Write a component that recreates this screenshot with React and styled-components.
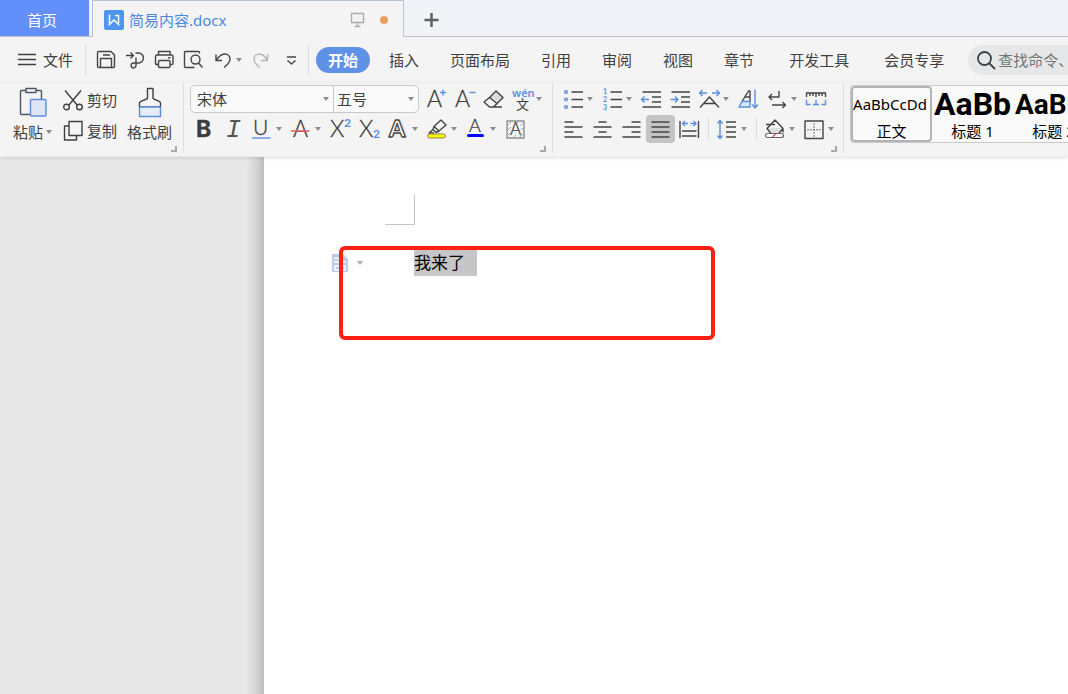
import React from 'react';
import styled, { createGlobalStyle, css } from 'styled-components';

const BLUE = '#5b8fdd';

const GlobalStyle = createGlobalStyle`
  * {
    box-sizing: border-box;
  }
  body {
    margin: 0;
    overflow: hidden;
    background: #e8e8e8;
    color: #404040;
    font: 15px/20px 'Noto Sans', 'Noto Sans CJK SC', sans-serif;
  }
  button,
  select,
  input {
    font: inherit;
    color: inherit;
    border: 0;
    padding: 0;
    margin: 0;
    background: none;
  }
`;

const AppShell = styled.div`
  display: flex;
  flex-direction: column;
  min-height: 100vh;
`;

/* ---------- tab strip ---------- */

const TabStrip = styled.header`
  display: flex;
  height: 37px;
  background: #f1f3f8;
`;

const HomeTab = styled.button`
  width: 89px;
  padding: 3px 5px 0 0;
  background: #638ffb;
  background-clip: padding-box;
  border-bottom: 1px solid #bcc2d6;
  color: #fff;
`;

const TabGap = styled.div`
  flex: ${(props) => (props.$grow ? 1 : '0 0 3px')};
  border-bottom: 1px solid #bcc2d6;
`;

const DocTab = styled.div`
  display: flex;
  align-items: center;
  width: 312px;
  padding: 2px 15px 0 11px;
  border: 1px solid #bcc2d6;
  border-bottom: 0;
  background: #f4f4f4;
  color: #4d86e0;

  span {
    flex: 1;
    margin-left: 5px;
  }
`;

const Dot = styled.i`
  width: 8px;
  height: 8px;
  margin-left: 15px;
  border-radius: 50%;
  background: #e5a05c;
`;

const AddTab = styled.button`
  width: 55px;
  padding-top: 3px;
  border-bottom: 1px solid #bcc2d6;
`;

/* ---------- menu row ---------- */

const MenuBar = styled.nav`
  display: flex;
  align-items: center;
  height: 46px;
  background: #f4f4f4;
  white-space: nowrap;
`;

const FileButton = styled.button`
  display: flex;
  align-items: center;
  gap: 7px;
  padding: 0 12px 0 18px;
`;

const Divider = styled.i`
  flex: none;
  width: 1px;
  height: ${(props) => props.$height || 30}px;
  margin: 0 ${(props) => props.$space || 0}px;
  background: #dcdcdc;
`;

const QuickTools = styled.div`
  display: flex;
  padding: 0 3px 0 6px;
`;

const MenuTabs = styled.div`
  display: flex;
  gap: 7px;
  padding-left: 7px;
`;

const MenuTab = styled.button`
  height: 26px;
  padding: 0 12px;
  border-radius: 13px;
  margin-left: ${(props) => (props.$wide ? 4 : 0)}px;

  ${(props) =>
    props.$active &&
    css`
      background: #5f92e6;
      color: #fff;
      font-weight: 700;
    `}
`;

const Search = styled.label`
  display: flex;
  align-items: center;
  flex: 1;
  gap: 2px;
  min-width: 100px;
  height: 30px;
  margin-left: 12px;
  padding-left: 8px;
  border-radius: 15px 0 0 15px;
  background: #e6e7e8;
  overflow: hidden;

  input {
    flex: 1;
    width: 70px;
    outline: 0;
  }
  input::placeholder {
    color: #757575;
    opacity: 1;
  }
`;

/* ---------- ribbon ---------- */

const Ribbon = styled.section`
  display: flex;
  height: 74px;
  background: #f4f4f4;
  border-bottom: 1px solid #ececec;
  box-shadow: 0 1px 4px rgba(0, 0, 0, 0.12);
  z-index: 1;
  overflow: hidden;
  white-space: nowrap;
`;

const Group = styled.div`
  position: relative;
  display: flex;
  flex: none;
  padding: ${(props) => props.$pad};
  border-right: 1px solid #dedede;
  margin-bottom: 3px;
`;

const Corner = styled.i`
  position: absolute;
  right: 6px;
  bottom: 1px;
  width: 6px;
  height: 6px;
  border: solid #a9a9a9;
  border-width: 0 2px 2px 0;
`;

const Rows = styled.div`
  display: flex;
  flex-direction: column;
  gap: 2px;
`;

const Row = styled.div`
  display: flex;
  align-items: center;
  height: 28px;
`;

const BigButton = styled.button`
  display: flex;
  flex-direction: column;
  align-items: center;
  gap: 4px;
  padding-top: 2px;

  span {
    display: flex;
    align-items: center;
    gap: 3px;
  }
`;

const ClipButton = styled.button`
  display: flex;
  align-items: center;
  gap: 3px;
  height: 29px;
  margin: 0 10px 0 11px;
`;

const ToolButton = styled.button`
  display: flex;
  align-items: center;
  width: ${(props) => (props.$split ? 39 : 29)}px;
  height: 28px;
  padding-left: 2px;
  border-radius: 4px;
  background: ${(props) => (props.$active ? '#c4c4c4' : 'none')};
  color: ${(props) => (props.$muted ? '#b4b4b4' : '#444')};
`;

const Caret = styled.i`
  flex: none;
  margin-left: ${(props) => props.$space || 0}px;
  border: 3px solid transparent;
  border-top: 4px solid ${(props) => (props.$light ? '#b0b0b0' : '#8c8c8c')};
  border-bottom: 0;
`;

const Icon = styled.svg`
  flex: none;
  display: block;
  overflow: visible;
  fill: none;
  stroke: currentColor;
  stroke-width: ${(props) => props.$stroke || 1.4};
  stroke-linejoin: round;

  text {
    fill: #3c3c3c;
    stroke: #3c3c3c;
    stroke-width: 0.3;
    font-family: Lato, sans-serif;
    font-weight: 300;
  }
  .blue {
    stroke: ${BLUE};
  }
  text.blue {
    fill: ${BLUE};
    stroke: none;
    font-weight: 700;
  }
`;

const Pickers = styled.div`
  display: flex;
  height: 28px;
  margin-right: 2px;
  border: 1px solid #c9c9c9;
  border-radius: 5px;
  background: #fafafa;
`;

const Picker = styled.label`
  display: flex;
  align-items: center;
  width: ${(props) => props.$width}px;
  padding-right: 4px;

  & + & {
    border-left: 1px solid #c9c9c9;
  }
  select {
    flex: 1;
    min-width: 0;
    height: 26px;
    padding-left: ${(props) => props.$indent}px;
    appearance: none;
    outline: 0;
  }
`;

const Gallery = styled.div`
  display: flex;
  flex: 1;
  min-width: 0;
  height: 58px;
  margin: 2px 0 0 6px;
  border: 1px solid #c9c9c9;
  border-right: 0;
  border-radius: 4px 0 0 4px;
  background: #f9f9f9;
  overflow: hidden;
`;

const StyleCard = styled.button`
  display: flex;
  flex: none;
  flex-direction: column;
  align-items: center;
  width: 81px;
  border: 2px solid ${(props) => (props.$active ? '#b3b3b3' : 'transparent')};
  border-radius: 4px;
  color: #000;
  overflow: hidden;
`;

const Sample = styled.span`
  align-self: flex-start;
  height: 33px;
  line-height: 33px;
  font-size: 15px;

  ${(props) =>
    props.$size &&
    css`
      font-family: Roboto, sans-serif;
      font-weight: 700;
      font-size: ${props.$size}px;
    `}
`;

/* ---------- document ---------- */

const Workspace = styled.main`
  display: flex;
  flex: 1;
`;

const Gutter = styled.div`
  width: 264px;
  background: linear-gradient(to left, #bdbdbd, #d2d2d2 7px, #e8e8e8 18px);
`;

const Page = styled.article`
  position: relative;
  flex: 1;
  background: #fff;
`;

const MarginMark = styled.div`
  width: 30px;
  height: 30px;
  margin: 38px 0 25px 121px;
  border: solid #c4c4c4;
  border-width: 0 1px 1px 0;
`;

const Line = styled.div`
  display: flex;
  align-items: center;
  height: 26px;
  padding-left: 68px;
`;

const PasteOptions = styled.button`
  display: flex;
  align-items: center;
  width: 82px;
`;

const Selection = styled.p`
  width: 63px;
  height: 26px;
  margin: 0;
  background: #c6c6c6;
  color: #000;
  font-size: 17px;
  line-height: 26px;
`;

const Callout = styled.div`
  position: absolute;
  left: 75px;
  top: 89px;
  width: 376px;
  height: 94px;
  border: 4px solid #fd2015;
  border-radius: 6px;
`;

/* 25x24 tool icons */
const icons = {
  save: (
    <>
      <path d="M5 3.5h12l3.5 3.5v11.5a1 1 0 0 1-1 1h-14.5a1.5 1.5 0 0 1-1.5-1.5v-13a1.5 1.5 0 0 1 1.5-1.5z" />
      <path d="M9 7h7M6.5 19.5v-9h11v9" />
    </>
  ),
  exportPdf: (
    <>
      <path d="M12.5 5h3a5 5 0 0 1 0 10h-4.5a2.5 2.5 0 1 0 2 2.5V9.5" />
      <path d="M3 7.5h7M7.5 4.5l3 3-3 3" />
    </>
  ),
  print: (
    <>
      <path d="M6.5 7V3.5h11.5V7M6.5 16.5h-2a1 1 0 0 1-1-1V8.5a1.5 1.5 0 0 1 1.5-1.5h14.5a1.5 1.5 0 0 1 1.5 1.5v7a1 1 0 0 1-1 1h-2" />
      <rect x="6.5" y="12.5" width="11.5" height="7" rx="1" />
      <path d="M16 9.8h2.5" />
    </>
  ),
  preview: (
    <>
      <path d="M18.5 5.5v-1a1 1 0 0 0-1-1h-13a1 1 0 0 0-1 1v14a1 1 0 0 0 1 1h9" />
      <circle cx="14.5" cy="11.5" r="4.5" />
      <path d="M17.5 15l4 4.5" />
    </>
  ),
  undo: <path d="M6 6.5v6h6M6 12.5C9 8 11.5 6 14.5 6c3.5 0 5.5 2.5 5.5 5 0 4-3 6-6 8.5" />,
  redo: <path d="M18.5 6v6.5h-6.5M18.5 12.5C16 8 13.5 6 10.5 6 7 6 5 8.5 5 11c0 4 3 6 5.5 8.5" />,
  more: <path d="M9 9h9M9.5 12.5l4 3.5 4-3.5" />,
  grow: (
    <>
      <text x="4" y="20" fontSize="23">A</text>
      <path className="blue" d="M20 2.5v6M17 5.5h6" />
    </>
  ),
  shrink: (
    <>
      <text x="3" y="20" fontSize="23">A</text>
      <path className="blue" d="M17.5 5.5h6" />
    </>
  ),
  eraser: (
    <>
      <path fill="#dcdcdc" d="M15 4l7 6.5-6 6-7.500-6z" />
      <path d="M8.5 10.5L3 15l5.5 5h4l3.5-3.5M12 20h9" />
    </>
  ),
  pinyin: (
    <>
      <text className="blue" x="2" y="10" style={{ font: '600 11px "Noto Sans"' }}>wén</text>
      <text x="6" y="22" style={{ font: '400 13px "Noto Sans CJK SC"', strokeWidth: 0 }}>文</text>
    </>
  ),
  bold: <text x="4" y="20" style={{ font: '700 23px Inter' }}>B</text>,
  italic: (
    <text x="5" y="20" style={{ font: 'italic 25px "Liberation Mono"', fill: '#555', strokeWidth: 0 }}>I</text>
  ),
  underline: (
    <>
      <text x="3" y="18" fontSize="21">U</text>
      <path className="blue" d="M2 21h18.5" />
    </>
  ),
  strike: (
    <>
      <text x="4" y="20" fontSize="23">A</text>
      <path stroke="#dc6464" strokeWidth="1.6" d="M2 14h18.5" />
    </>
  ),
  superscript: (
    <>
      <text x="2" y="20" fontSize="23">X</text>
      <text className="blue" x="16" y="10" fontSize="12">2</text>
    </>
  ),
  subscript: (
    <>
      <text x="2" y="20" fontSize="23">X</text>
      <text className="blue" x="16" y="21" fontSize="12">2</text>
    </>
  ),
  effects: (
    <>
      <text x="5" y="20" style={{ font: '900 23px Lato', fill: '#dcdcdc', stroke: '#dcdcdc' }}>A</text>
      <text x="3" y="20" style={{ font: '900 23px Lato', fill: '#fff', stroke: '#444', strokeWidth: 1.3 }}>A</text>
    </>
  ),
  highlight: (
    <>
      <path d="M9 9.5l7-6.5 5 5-7 6zM9 9.5l-1 3 3 3 3-1.5M8 12.5l-4 3.5h5" />
      <rect x="2.5" y="17" width="18" height="4" rx="2" fill="#fff600" stroke="#8a8a60" strokeWidth="1" />
    </>
  ),
  color: (
    <>
      <text x="5" y="15" fontSize="18">A</text>
      <rect x="3" y="17" width="17" height="3" rx="1.5" fill="#00f" stroke="none" />
    </>
  ),
  shading: (
    <>
      <rect x="4" y="4" width="17" height="17" stroke="#8e8e8e" />
      <path stroke="#a6a6a6" strokeWidth="1" d="M4 9l5-5M4 14l4-4M4 19l3-3M16 4l-2 2M21 5l-4 4M21 10l-3 3M21 16l-5 5M11 20l2-2" />
      <text x="7" y="18" fontSize="17">A</text>
    </>
  ),
  bullets: (
    <>
      <g className="blue">
        <circle cx="5" cy="5" r="1.4" />
        <circle cx="5" cy="12.5" r="1.4" />
        <circle cx="5" cy="20" r="1.4" />
      </g>
      <path d="M10.5 5h11.5M10.5 12.5h11.5M10.5 20h11.5" />
    </>
  ),
  numbers: (
    <>
      <text className="blue" x="3" y="7" fontSize="7">1</text>
      <text className="blue" x="3" y="15" fontSize="7">2</text>
      <text className="blue" x="3" y="23" fontSize="7">3</text>
      <path d="M10.5 5h11.5M10.5 12.5h11.5M10.5 20h11.5" />
    </>
  ),
  outdent: (
    <>
      <path d="M3.5 5h18.5M13 10h9M13 15h9M3.5 20h18.5" />
      <path className="blue" d="M10 12.5H3M5.5 9.5l-3 3 3 3" />
    </>
  ),
  indent: (
    <>
      <path d="M3.5 5h18.5M13 10h9M13 15h9M3.5 20h18.5" />
      <path className="blue" d="M2.5 12.5h7M7 9.5l3 3-3 3" />
    </>
  ),
  scale: (
    <>
      <path d="M3 20.5L12.5 10 22 20.5M7 16.5h11" />
      <path className="blue" d="M10 6H3M5.5 3L2.5 6l3 3M15 6h7M19.5 3l3 3-3 3" />
    </>
  ),
  sort: (
    <>
      <path d="M6 14.5L12.5 4H14v10.5M9 10h5" />
      <path className="blue" fill="#dbe6fa" d="M6 14.5h8v5.5H3z" />
      <path className="blue" d="M19 2.5v18M16 17.5l3 3.5 3-3.5" />
    </>
  ),
  wrap: <path d="M14 4v6H4M7 7l-3 3 3 3M7 18h13.5M17.5 15l3 3-3 3" />,
  tabs: (
    <>
      <path d="M2.5 10V6h19v4M6 6v3M9 6v3M12 6v4M15 6v3M18 6v3" />
      <path className="blue" d="M2.5 13v4.5h4M21.5 13v4.5h-4M9 17.5h6M12 13v4.5" />
    </>
  ),
  left: <path d="M3.5 5h9M3.5 10h18M3.5 15h9M3.5 20h18" />,
  center: <path d="M8.5 5h8M3.5 10h18M8.5 15h8M3.5 20h18" />,
  right: <path d="M12.5 5h9M3.5 10h18M12.5 15h9M3.5 20h18" />,
  justify: <path d="M3.5 5h18M3.5 10h18M3.5 15h18M3.5 20h18" />,
  distribute: (
    <>
      <path d="M3 4v17M21.5 4v17M5 14h14.5M5 19h14.5" />
      <path className="blue" d="M11 6.5H5.5M8 4L5.5 6.5 8 9M13.5 6.5H19M16.5 4L19 6.5 16.5 9" />
    </>
  ),
  spacing: (
    <>
      <path d="M11 5h10M11 10h10M11 15h10M11 20h10" />
      <path className="blue" d="M5 4v17M2.5 6.5L5 3.5l2.5 3M2.5 18.5l2.5 3 2.5-3" />
    </>
  ),
  fill: (
    <>
      <path fill="#dedede" stroke="none" d="M5 11h14l-5 5H8z" />
      <path d="M7.5 16L4 11.5 12 3l8 8.5-4 4.5M3 7.5h9M20 11.5v4" />
      <rect x="2.5" y="16.5" width="18" height="4" rx="2" fill="#fff" stroke="#666" strokeWidth="1.2" />
      <path stroke="#e05050" d="M9.5 20l4-4" />
    </>
  ),
  border: (
    <>
      <rect x="3" y="4" width="18" height="17.5" />
      <path strokeWidth="1" stroke="#777" strokeDasharray="2 1" d="M12 6v14M5 12.8h14" />
    </>
  ),
};

function Tool({ name, label, split, active, muted }) {
  return (
    <ToolButton type="button" aria-label={label} $split={split} $active={active} $muted={muted}>
      <Icon width="25" height="24" viewBox="0 0 25 24">
        {icons[name]}
      </Icon>
      {split && <Caret $space={1} />}
    </ToolButton>
  );
}

const menuTabs = ['开始', '插入', '页面布局', '引用', '审阅', '视图', '章节', '开发工具', '会员专享'];

function Tabs() {
  return (
    <TabStrip>
      <HomeTab type="button">首页</HomeTab>
      <TabGap />
      <DocTab>
        <Icon width="20" height="20" viewBox="0 0 20 20">
          <rect width="20" height="20" rx="2" fill="#4f94ee" stroke="none" />
          <path stroke="#fff" strokeWidth="1.5" strokeLinejoin="miter" d="M5.500 4.500v10l4.500-4.500 4.500 4.500V5.500h-3.500" />
        </Icon>
        <span>简易内容.docx</span>
        <Icon width="15" height="16" viewBox="0 0 15 16">
          <path stroke="#adadad" d="M1.5 1.5h12v9h-12zM7.5 10.5v4M4.5 14.5h6" />
        </Icon>
        <Dot />
      </DocTab>
      <AddTab type="button" aria-label="新建">
        <Icon width="55" height="16" viewBox="0 0 55 16" $stroke={2.5}>
          <path stroke="#606060" d="M27.5 1v14M20.5 8h14" />
        </Icon>
      </AddTab>
      <TabGap $grow />
    </TabStrip>
  );
}

function Menu() {
  return (
    <MenuBar>
      <FileButton type="button">
        <Icon width="18" height="14" viewBox="0 0 18 14">
          <path d="M0 1.5h18M0 6.5h18M0 11.5h18" />
        </Icon>
        文件
      </FileButton>
      <Divider />
      <QuickTools>
        <Tool name="save" label="保存" />
        <Tool name="exportPdf" label="输出为PDF" />
        <Tool name="print" label="打印" />
        <Tool name="preview" label="打印预览" />
        <Tool name="undo" label="撤销" split />
        <Tool name="redo" label="恢复" muted />
        <Tool name="more" label="更多" />
      </QuickTools>
      <Divider />
      <MenuTabs>
        {menuTabs.map((tab, i) => (
          <MenuTab key={tab} type="button" $active={i === 0} $wide={i > 6}>
            {tab}
          </MenuTab>
        ))}
      </MenuTabs>
      <Search>
        <Icon width="20" height="20" viewBox="0 0 20 20" $stroke={1.8}>
          <circle cx="8.5" cy="8.5" r="6.5" />
          <path d="M13 13l6 6" />
        </Icon>
        <input aria-label="查找命令" placeholder="查找命令、搜索模板" />
      </Search>
    </MenuBar>
  );
}

function ClipboardGroup() {
  return (
    <Group $pad="2px 11px 0 13px">
      <BigButton type="button">
        <Icon width="28" height="31" viewBox="0 0 28 31">
          <path stroke="#4a5568" d="M7 3.5H2.5a1 1 0 0 0-1 1v22a1 1 0 0 0 1 1H11M17 3.5h4.5a1 1 0 0 1 1 1V12M7 1.5h10v4H7z" />
          <rect className="blue" x="11.5" y="12.5" width="15.5" height="16.5" rx="1" fill="#e0e5f5" />
        </Icon>
        <span>
          粘贴 <Caret />
        </span>
      </BigButton>
      <Rows>
        <ClipButton type="button">
          <Icon width="21" height="22" viewBox="0 0 21 22">
            <path d="M2 1.5l12.5 15M18 1.5L5.5 16.5" />
            <circle cx="3.5" cy="18" r="2.8" />
            <circle cx="16.5" cy="18" r="2.8" />
          </Icon>
          剪切
        </ClipButton>
        <ClipButton type="button">
          <Icon width="21" height="22" viewBox="0 0 21 22">
            <path d="M6 6H1.5v14h12v-4.5" />
            <rect x="6" y="1.5" width="13" height="14" />
          </Icon>
          复制
        </ClipButton>
      </Rows>
      <BigButton type="button">
        <Icon width="24" height="31" viewBox="0 0 24 31">
          <path d="M9.5 1.5h5.5v9.5c0 2 7.5 2.5 7.5 5v4H1.5v-4c0-2.500 8-3 8-5z" />
          <rect className="blue" x="1.5" y="20" width="21" height="9.5" fill="#e6edf8" />
        </Icon>
        <span>格式刷</span>
      </BigButton>
      <Corner />
    </Group>
  );
}

function FontGroup() {
  return (
    <Group $pad="2px 5px 0 6px">
      <Rows>
        <Row>
          <Pickers>
            <Picker $width={142} $indent={6}>
              <select aria-label="字体" defaultValue="宋体">
                <option>宋体</option>
              </select>
              <Caret />
            </Picker>
            <Picker $width={85} $indent={3}>
              <select aria-label="字号" defaultValue="五号">
                <option>五号</option>
              </select>
              <Caret />
            </Picker>
          </Pickers>
          <Tool name="grow" label="增大字号" />
          <Tool name="shrink" label="减小字号" />
          <Tool name="eraser" label="清除格式" />
          <Tool name="pinyin" label="拼音指南" split />
        </Row>
        <Row>
          <Tool name="bold" label="加粗" />
          <Tool name="italic" label="倾斜" />
          <Tool name="underline" label="下划线" split />
          <Tool name="strike" label="删除线" split />
          <Tool name="superscript" label="上标" />
          <Tool name="subscript" label="下标" />
          <Tool name="effects" label="文字效果" split />
          <Tool name="highlight" label="突出显示" split />
          <Tool name="color" label="字体颜色" split />
          <Tool name="shading" label="字符底纹" />
        </Row>
      </Rows>
      <Corner />
    </Group>
  );
}

function ParagraphGroup() {
  return (
    <Group $pad="2px 4px 0 6px">
      <Rows>
        <Row>
          <Tool name="bullets" label="项目符号" split />
          <Tool name="numbers" label="编号" split />
          <Tool name="outdent" label="减少缩进量" />
          <Tool name="indent" label="增加缩进量" />
          <Tool name="scale" label="中文版式" split />
          <Tool name="sort" label="排序" />
          <Tool name="wrap" label="显示/隐藏段落标记" split />
          <Tool name="tabs" label="制表位" />
        </Row>
        <Row>
          <Tool name="left" label="左对齐" />
          <Tool name="center" label="居中对齐" />
          <Tool name="right" label="右对齐" />
          <Tool name="justify" label="两端对齐" active />
          <Tool name="distribute" label="分散对齐" />
          <Divider $height={22} $space={4} />
          <Tool name="spacing" label="行距" split />
          <Divider $height={22} $space={4} />
          <Tool name="fill" label="底纹颜色" split />
          <Tool name="border" label="边框" split />
        </Row>
      </Rows>
      <Corner />
    </Group>
  );
}

export default function App() {
  return (
    <AppShell>
      <GlobalStyle />
      <Tabs />
      <Menu />
      <Ribbon>
        <ClipboardGroup />
        <FontGroup />
        <ParagraphGroup />
        <Gallery>
          <StyleCard type="button" $active>
            <Sample>AaBbCcDd</Sample>
            正文
          </StyleCard>
          <StyleCard type="button">
            <Sample $size={32}>AaBb</Sample>
            标题 1
          </StyleCard>
          <StyleCard type="button">
            <Sample $size={28}>AaBb</Sample>
            标题 2
          </StyleCard>
        </Gallery>
      </Ribbon>
      <Workspace>
        <Gutter />
        <Page>
          <MarginMark />
          <Line>
            <PasteOptions type="button" aria-label="粘贴选项">
              <Icon width="16" height="18" viewBox="0 0 16 18">
                <path fill="#b9cdea" stroke="none" d="M0 0h11l5 5v13H0z" />
                <path stroke="#fff" strokeWidth="1.5" d="M2 4.5h9M2 8h12M3 12v4h10v-4zM6 12h4" />
              </Icon>
              <Caret $space={9} $light />
            </PasteOptions>
            <Selection>我来了</Selection>
          </Line>
          <Callout />
        </Page>
      </Workspace>
    </AppShell>
  );
}
